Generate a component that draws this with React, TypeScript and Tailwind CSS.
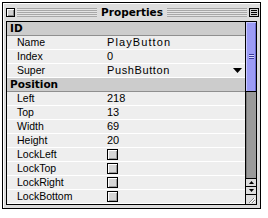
import React from "react";

type Row =
  | { kind: "header"; label: string }
  | { kind: "text"; label: string; value: string; track?: string; menu?: boolean }
  | { kind: "check"; label: string };

const rows: Row[] = [
  { kind: "header", label: "ID" },
  { kind: "text", label: "Name", value: "PlayButton", track: "tracking-[1.1px]" },
  { kind: "text", label: "Index", value: "0" },
  { kind: "text", label: "Super", value: "PushButton", track: "tracking-[0.6px]", menu: true },
  { kind: "header", label: "Position" },
  { kind: "text", label: "Left", value: "218" },
  { kind: "text", label: "Top", value: "13" },
  { kind: "text", label: "Width", value: "69" },
  { kind: "text", label: "Height", value: "20" },
  { kind: "check", label: "LockLeft" },
  { kind: "check", label: "LockTop" },
  { kind: "check", label: "LockRight" },
  { kind: "check", label: "LockBottom" },
];

const bold = "font-['DejaVu_Sans',sans-serif]";
const plain = "font-['Liberation_Sans',Arial,sans-serif]";

function Stripes({ className }: { className: string }) {
  return (
    <div
      className={`h-[9px] bg-[repeating-linear-gradient(to_bottom,#a8a8a8_0px,#a8a8a8_1px,#e4e4e4_1px,#e4e4e4_2px)] ${className}`}
    />
  );
}

function Checkbox() {
  return (
    <div className="w-[11px] h-[11px] border border-black bg-[#d6d6d6] shadow-[inset_1px_1px_0_#fff,inset_-1px_-1px_0_#9a9a9a]" />
  );
}

function PropRow({ row }: { row: Row }) {
  if (row.kind === "header") {
    return (
      <div className="h-[14px] bg-[#cccccc] border-b border-[#8f8f8f] flex items-center pl-[3px]">
        <span className={`${bold} text-[10.5px] font-bold text-black leading-none`}>{row.label}</span>
      </div>
    );
  }
  return (
    <div className="h-[14px] bg-[#eeeeee] border-b border-white flex items-center">
      <span className={`${plain} w-[100px] pl-[10px] text-[10.5px] text-black leading-none`}>{row.label}</span>
      {row.kind === "check" ? (
        <Checkbox />
      ) : (
        <span className={`${plain} flex-1 text-[11px] text-black leading-none ${row.track ?? ""}`}>
          {row.value}
        </span>
      )}
      {row.kind === "text" && row.menu && (
        <svg width="9" height="5" viewBox="0 0 9 5" className="mr-[3px]">
          <path d="M0 0 H9 L4.5 5 Z" fill="#000" />
        </svg>
      )}
    </div>
  );
}

function Scrollbar() {
  return (
    <div className="w-[11px] border-l border-black flex flex-col bg-[#999999]">
      <div className="h-[70px] bg-[#9c9cf5] border-b border-black shadow-[inset_1px_1px_0_#c8c8ff,inset_-1px_0_0_#6a6ad0] flex items-center justify-center">
        <div className="w-[5px] h-[5px] bg-[repeating-linear-gradient(to_bottom,#3c3c9c_0px,#3c3c9c_1px,#d8d8ff_1px,#d8d8ff_2px)]" />
      </div>
      <div className="flex-1 bg-[#9a9a9a] shadow-[inset_1px_0_0_#7a7a7a]" />
      <div className="h-[8px] bg-[#dddddd] border-t border-black flex items-center justify-center">
        <svg width="5" height="3" viewBox="0 0 5 3">
          <path d="M2.5 0 L5 3 H0 Z" fill="#000" />
        </svg>
      </div>
      <div className="h-[8px] bg-[#dddddd] border-t border-black flex items-center justify-center">
        <svg width="5" height="3" viewBox="0 0 5 3">
          <path d="M0 0 H5 L2.5 3 Z" fill="#000" />
        </svg>
      </div>
      <div className="h-[10px] bg-[#dddddd] border-t border-black flex items-end justify-end">
        <svg width="9" height="8" viewBox="0 0 9 8">
          <path d="M2 7 L7 2 M5 7 L8 4" stroke="#888" strokeWidth="1" />
          <path d="M3 7 L8 2 M6 7 L8 5" stroke="#fff" strokeWidth="1" />
        </svg>
      </div>
    </div>
  );
}

export default function App() {
  return (
    <div className="w-[268px] h-[218px] bg-white pl-[2px] pt-[2px]">
      <div className="w-[259px] h-[207px] border border-black bg-[#dddddd] flex flex-col shadow-[inset_1px_1px_0_#fff]">
        {/* title bar */}
        <div className="h-[18px] flex items-center pl-[3px] pr-[1px]">
          <div className="w-[9px] h-[9px] border border-black bg-[#cfcfcf] shadow-[inset_1px_1px_0_#fff,inset_-1px_-1px_0_#8a8a8a]" />
          <Stripes className="flex-1 ml-[2px]" />
          <span className={`${bold} text-[10.5px] font-bold text-black px-[4px] leading-none`}>
            Properties
          </span>
          <Stripes className="flex-1 mr-[2px]" />
          <div className="w-[10px] h-[9px] border border-black bg-[#cfcfcf] flex flex-col justify-center gap-[1px] px-[1px]">
            <div className="h-px bg-black" />
            <div className="h-px bg-black" />
            <div className="h-px bg-black" />
          </div>
        </div>
        {/* body */}
        <div className="flex-1 mx-[3px] mb-[3px] border border-black flex bg-[#eeeeee]">
          <div className="flex-1 flex flex-col overflow-hidden">
            {rows.map((row) => (
              <PropRow key={row.label} row={row} />
            ))}
          </div>
          <Scrollbar />
        </div>
      </div>
    </div>
  );
}
